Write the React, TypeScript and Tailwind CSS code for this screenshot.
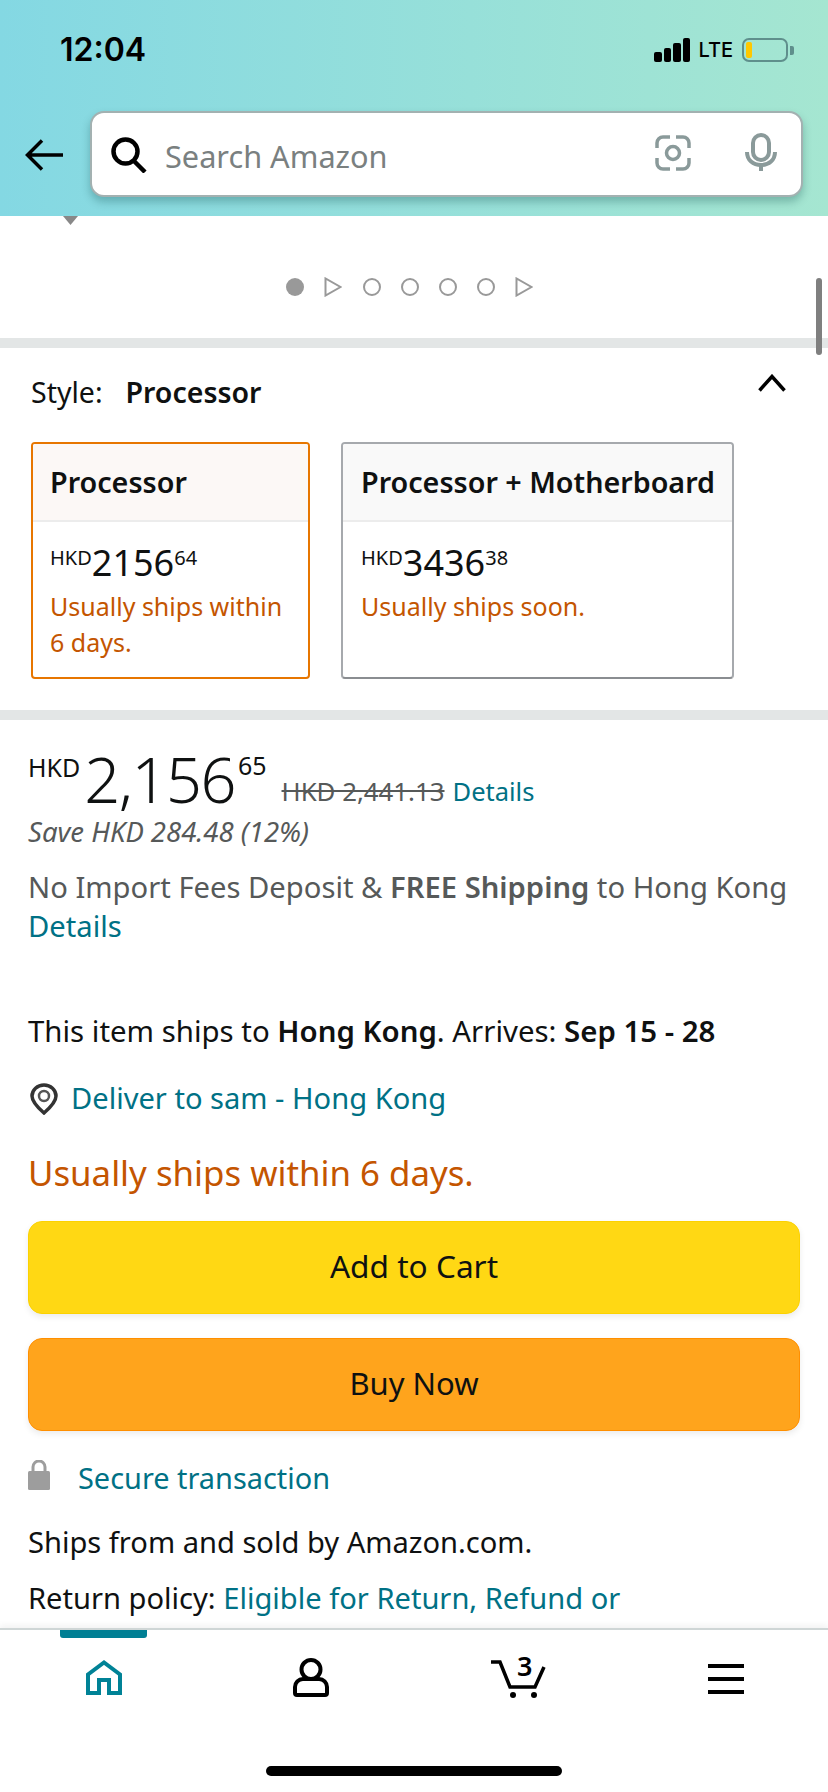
import React from "react";

const font = "font-['Noto_Sans',sans-serif]";

const StatusBar: React.FC = () => (
    <div className="flex items-center justify-between pl-[60px] pr-[34px] h-[100px]">
        <span className="font-['Inter',sans-serif] text-[32px] font-semibold text-black leading-none">12:04</span>
        <div className="flex items-center">
            <div className="flex items-end gap-[2px] h-[24px]">
                <div className="w-[7.5px] h-[10px] bg-black rounded-[2px]"/>
                <div className="w-[7.5px] h-[14px] bg-black rounded-[2px]"/>
                <div className="w-[7.5px] h-[19px] bg-black rounded-[2px]"/>
                <div className="w-[7.5px] h-[24px] bg-black rounded-[2px]"/>
            </div>
            <span className="ml-[8px] font-['Inter',sans-serif] text-[20px] font-medium text-black leading-none">LTE</span>
            <div className="ml-[9px] w-[46px] h-[24px] border-2 border-[#5f8f8c] rounded-[7px] p-[2px]">
                <div className="w-[6px] h-full bg-[#ffc800] rounded-[2px]"/>
            </div>
            <div className="w-[4px] h-[9px] bg-[#5f8f8c] rounded-r-[2px] ml-[2px]"/>
        </div>
    </div>
);

const SearchRow: React.FC = () => (
    <div className="flex items-start pl-[25px] pr-[25px] h-[116px] pt-[11px]">
        <svg className="w-[38px] h-[32px] mt-[28px] shrink-0" viewBox="0 0 38 32" fill="none" stroke="#000" strokeWidth="3.5">
            <path d="M38 16H3M17 1.5 2.5 16 17 30.5"/>
        </svg>
        <div className="ml-[27px] flex-1 h-[86px] bg-white rounded-[14px] border-2 border-[#a3b1b1] shadow-[0_5px_9px_rgba(0,60,60,0.28)] flex items-center pl-[19px] pr-[26px]">
            <svg className="w-[36px] h-[36px] shrink-0 mt-[1px]" viewBox="0 0 36 36" fill="none" stroke="#000" strokeWidth="4.5">
                <circle cx="14.5" cy="14.5" r="12"/>
                <path d="M23 24l11 11"/>
            </svg>
            <span className={`${font} ml-[18px] text-[30.7px] leading-none pt-[5px] text-[#7a8080] flex-1`}>Search Amazon</span>
            <svg className="w-[36px] h-[36px] shrink-0 -mt-[3px]" viewBox="0 0 36 36" fill="none" stroke="#8a9a9a" strokeWidth="3.5">
                <path d="M15 2H8a6 6 0 0 0-6 6v5M21 2h7a6 6 0 0 1 6 6v5M15 34H8a6 6 0 0 1-6-6v-5M21 34h7a6 6 0 0 0 6-6v-5"/>
                <circle cx="18" cy="18" r="6.500"/>
            </svg>
            <svg className="ml-[54px] mr-[-2px] w-[32px] h-[38px] shrink-0 -mt-[5px]" viewBox="0 0 32 38" fill="none" stroke="#8a9a9a">
                <rect x="8" y="2" width="16" height="25" rx="8" strokeWidth="4"/>
                <path d="M2 19c0 8 6 13 14 13s14-5 14-13" strokeWidth="4"/>
                <path d="M16 31v7" strokeWidth="4"/>
            </svg>
        </div>
    </div>
);

const Dot: React.FC<{filled?: boolean}> = ({filled}) => (
    <div className={filled ? "w-[18px] h-[18px] rounded-full bg-[#999]" : "w-[18px] h-[18px] rounded-full border-2 border-[#999]"}/>
);

const Play: React.FC = () => (
    <svg className="w-[18px] h-[20px]" viewBox="0 0 18 20" fill="none" stroke="#999" strokeWidth="2">
        <path d="M1.5 1.5v17L16.5 10z"/>
    </svg>
);

const Carousel: React.FC = () => (
    <div className="relative h-[122px]">
        <svg className="absolute left-[63px] top-0 w-[15px] h-[9px]" viewBox="0 0 15 9" fill="#888">
            <path d="M0 0h15L7.500 9z"/>
        </svg>
        <div className="flex items-center gap-[20px] pl-[286px] pt-[61px]">
            <Dot filled/>
            <Play/>
            <div className="flex gap-[20px] ml-[1px]">
                <Dot/><Dot/><Dot/><Dot/>
            </div>
            <Play/>
        </div>
        <div className="absolute right-[6px] top-[62px] w-[6px] h-[77px] bg-[#7f7f7f] rounded-full z-10"/>
    </div>
);

const Band: React.FC = () => <div className="h-[10px] bg-[#e3e6e6]"/>;

const StyleCard: React.FC<{
    title: string; cents: string; whole: string; note: string; selected?: boolean; width: string;
}> = ({title, cents, whole, note, selected, width}) => (
    <div className={`${width} h-[237px] rounded-[4px] border-2 overflow-hidden ${selected ? "border-[#e77600]" : "border-[#a6a9ad] border-b-[#8a8d91]"}`}>
        <div className={`h-[78px] flex items-center border-b-2 border-[#ececec] ${selected ? "px-[17px] bg-[#fcf8f6]" : "px-[18px] bg-[#f9f9f9]"}`}>
            <span className="text-[28.7px] font-semibold text-[#0f1111] whitespace-nowrap">{title}</span>
        </div>
        <div className={`pt-[21px] ${selected ? "px-[17px]" : "px-[18px]"}`}>
            <div className="flex items-start text-[#0f1111] leading-none">
                <span className="text-[20px] mt-[5px]">HKD</span>
                <span className="text-[36px] mt-[2px]">{whole}</span>
                <span className="text-[20px] mt-[5px]">{cents}</span>
            </div>
            <p className="text-[25px] leading-[36px] text-[#c45500] mt-[7px]">{note}</p>
        </div>
    </div>
);

const StyleSection: React.FC = () => (
    <div className="h-[362px] px-[31px] relative">
        <div className="flex items-center h-[88px] mb-[6px] text-[28.5px] text-[#0f1111]">
            <span>Style:</span>
            <span className="font-semibold ml-[23px]">Processor</span>
        </div>
        <svg className="absolute left-[758px] top-[26px] w-[28px] h-[18px]" viewBox="0 0 28 18" fill="none" stroke="#000" strokeWidth="3.5">
            <path d="M1.500 16.500 14 2.500l12.500 14"/>
        </svg>
        <div className="flex gap-[31px]">
            <StyleCard selected width="w-[279px]" title="Processor" whole="2156" cents="64" note="Usually ships within 6 days."/>
            <StyleCard width="w-[393px]" title="Processor + Motherboard" whole="3436" cents="38" note="Usually ships soon."/>
        </div>
    </div>
);

const PriceBlock: React.FC = () => (
    <div className="px-[28px]">
        <div className="flex items-start h-[93px] text-[#0f1111]">
            <span className="text-[25px] leading-none mt-[35px]">HKD</span>
            <span className="text-[63px] leading-none font-light ml-[4px] mt-[27px] tracking-[-1.500px]">2,156</span>
            <span className="text-[25px] leading-none ml-[3px] mt-[33px]">65</span>
            <span className="text-[25.8px] leading-none ml-[15px] mt-[59px] text-[#565959] line-through">HKD 2,441.13</span>
            <span className="text-[25.5px] leading-none ml-[8px] mt-[59px] text-[#007185]">Details</span>
        </div>
        <p className="text-[27.5px] leading-[34px] italic text-[#565959] mt-[2px]">Save HKD 284.48 (12%)</p>
        <p className="text-[29.2px] leading-[39px] text-[#565959] mt-[19px]">
            No Import Fees Deposit &amp; <span className="font-semibold">FREE Shipping</span> to Hong Kong
            <br/>
            <span className="text-[#007185]">Details</span>
        </p>
    </div>
);

const DeliveryBlock: React.FC = () => (
    <div className="px-[28px] mt-[66px]">
        <p className="text-[29.4px] leading-[39px] text-[#0f1111]">
            This item ships to <span className="font-semibold">Hong Kong</span>. Arrives: <span className="font-semibold">Sep 15 - 28</span>
        </p>
        <div className="flex items-center mt-[28px] h-[39px]">
            <svg className="w-[28px] h-[32px] shrink-0 ml-[2px]" viewBox="0 0 28 32" fill="none">
                <path d="M14 30C6 23 2 18 2 13a12 11 0 0 1 24 0c0 5-4 10-12 17z" stroke="#333" strokeWidth="3.500"/>
                <circle cx="14" cy="13" r="5" stroke="#555" strokeWidth="2.500"/>
            </svg>
            <span className="ml-[13px] text-[29.1px] text-[#007185]">Deliver to sam - Hong Kong</span>
        </div>
        <p className="text-[34.800px] leading-[44px] text-[#c45500] mt-[33px]">Usually ships within 6 days.</p>
    </div>
);

const Buttons: React.FC = () => (
    <div className="px-[28px] mt-[26px] flex flex-col gap-[24px]">
        <div className="h-[93px] pb-[4px] rounded-[14px] bg-[#ffd814] border border-[#fcd200] shadow-[0_3px_6px_rgba(0,0,0,0.08)] flex items-center justify-center text-[31.6px] text-[#0f1111]">Add to Cart</div>
        <div className="h-[93px] pb-[2px] rounded-[14px] bg-[#ffa41c] border border-[#ff8f00] shadow-[0_3px_6px_rgba(0,0,0,0.08)] flex items-center justify-center text-[31px] text-[#0f1111]">Buy Now</div>
    </div>
);

const SellerInfo: React.FC = () => (
    <div className="px-[28px] mt-[27px]">
        <div className="flex items-center h-[39px]">
            <svg className="w-[22px] h-[30px] shrink-0 -mt-[6px]" viewBox="0 0 22 30" fill="none">
                <path d="M5 12V7a6 6 0 0 1 12 0v5" stroke="#9d9d9d" strokeWidth="3"/>
                <rect y="11" width="22" height="19" rx="1.500" fill="#9d9d9d"/>
            </svg>
            <span className="ml-[28px] text-[28.9px] text-[#007185]">Secure transaction</span>
        </div>
        <p className="text-[29.1px] leading-[39px] text-[#0f1111] mt-[26px]">Ships from and sold by Amazon.com.</p>
        <p className="text-[29.1px] leading-[39px] text-[#0f1111] mt-[17px] whitespace-nowrap">
            Return policy: <span className="text-[#007185]">Eligible for Return, Refund or</span>
        </p>
    </div>
);

const BottomNav: React.FC = () => (
    <div className="relative h-[164px] bg-white border-t-2 border-[#cfd6d6] shadow-[0_-3px_6px_rgba(0,0,0,0.05)]">
        <div className="absolute left-[60px] top-0 w-[87px] h-[8px] bg-[#007f94] rounded-b-[3px]"/>
        <div className="grid grid-cols-4 items-start h-[72px] pt-[30px]">
            <div className="flex justify-start pl-[86px]">
                <svg className="w-[36px] h-[35px]" viewBox="0 0 36 35" fill="none" stroke="#008296" strokeWidth="4">
                    <path d="M2 33V14.500L18 2.500l16 12V33H23V20H13v13z"/>
                </svg>
            </div>
            <div className="flex justify-start pl-[86px]">
                <svg className="w-[36px] h-[39px] -mt-[2px]" viewBox="0 0 36 39" fill="none" stroke="#000" strokeWidth="4">
                    <circle cx="18" cy="11.500" r="9.500"/>
                    <path d="M10 21h16a8 8 0 0 1 8 8v6a2 2 0 0 1-2 2H4a2 2 0 0 1-2-2v-6a8 8 0 0 1 8-8z"/>
                </svg>
            </div>
            <div className="relative pl-[77px]">
                <svg className="w-[56px] h-[39px]" viewBox="0 0 56 39" fill="none" stroke="#000" strokeWidth="3.500">
                    <path d="M0 2h9l10 25h25l9-20"/>
                    <circle cx="22" cy="35" r="3" fill="#000" stroke="none"/>
                    <circle cx="43" cy="35" r="3" fill="#000" stroke="none"/>
                </svg>
                <span className="absolute left-[103px] -top-[8px] text-[27px] font-semibold text-black leading-none">3</span>
            </div>
            <div className="flex justify-start pl-[87px] pt-[4px]">
                <div className="w-[36px] flex flex-col gap-[9px]">
                    <div className="h-[4px] bg-black"/>
                    <div className="h-[4px] bg-black"/>
                    <div className="h-[4px] bg-black"/>
                </div>
            </div>
        </div>
        <div className="flex justify-center mt-[64px]">
            <div className="w-[296px] h-[10px] bg-black rounded-full"/>
        </div>
    </div>
);

export default function App() {
    return (
        <div className={`${font} w-[828px] h-[1792px] flex flex-col overflow-hidden bg-white`}>
            <header className="h-[216px] bg-gradient-to-r from-[#84d8e3] to-[#a5e6d1] relative z-10">
                <StatusBar/>
                <SearchRow/>
            </header>
            <main className="flex-1 overflow-hidden">
                <Carousel/>
                <Band/>
                <StyleSection/>
                <Band/>
                <PriceBlock/>
                <DeliveryBlock/>
                <Buttons/>
                <SellerInfo/>
            </main>
            <BottomNav/>
        </div>
    );
}
